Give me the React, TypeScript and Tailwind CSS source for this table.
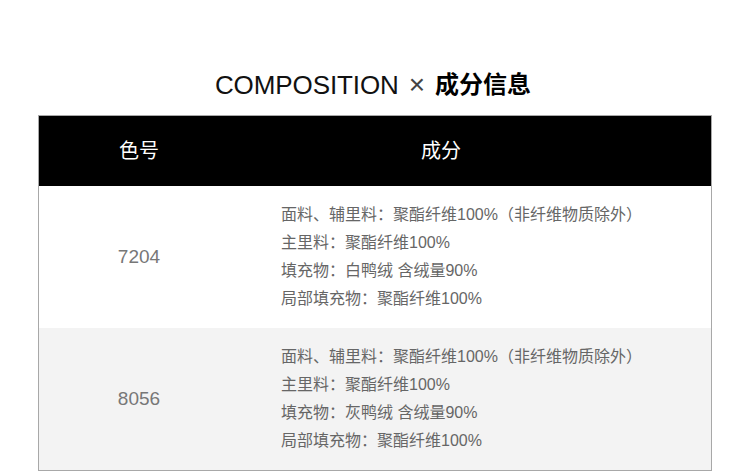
import React from "react";

const rows = [
  {
    code: "7204",
    lines: [
      "面料、辅里料：聚酯纤维100%（非纤维物质除外）",
      "主里料：聚酯纤维100%",
      "填充物：白鸭绒 含绒量90%",
      "局部填充物：聚酯纤维100%",
    ],
    bg: "bg-white",
  },
  {
    code: "8056",
    lines: [
      "面料、辅里料：聚酯纤维100%（非纤维物质除外）",
      "主里料：聚酯纤维100%",
      "填充物：灰鸭绒 含绒量90%",
      "局部填充物：聚酯纤维100%",
    ],
    bg: "bg-[#f3f3f3]",
  },
];

export default function App() {
  return (
    <div
      className="w-[750px] h-[471px] bg-white overflow-hidden"
      style={{ fontFamily: '"Liberation Sans", "Noto Sans CJK SC", sans-serif' }}
    >
      <div className="pt-[68px] h-[115px] flex justify-center">
        <div className="flex items-center h-[34px] text-[#111] -ml-[4px]">
          <span className="text-[26px] font-light tracking-[-0.1px]">COMPOSITION</span>
          <span className="text-[28px] font-extralight mx-[10px] text-[#444] leading-none">×</span>
          <span className="text-[24px] font-bold text-black">成分信息</span>
        </div>
      </div>
      <div className="mx-[38px] border border-[#a8a8a8]">
        <div className="flex h-[70px] bg-black text-white text-[20px] items-center">
          <div className="w-[200px] text-center">色号</div>
          <div className="pl-[182px]">成分</div>
        </div>
        {rows.map((r) => (
          <div key={r.code} className={`flex h-[142px] items-center ${r.bg}`}>
            <div className="w-[200px] text-center text-[19px] text-[#777]">{r.code}</div>
            <div className="pl-[42px] text-[16px] leading-[28px] text-[#666]">
              {r.lines.map((l, i) => (
                <div key={i}>{l}</div>
              ))}
            </div>
          </div>
        ))}
      </div>
    </div>
  );
}
